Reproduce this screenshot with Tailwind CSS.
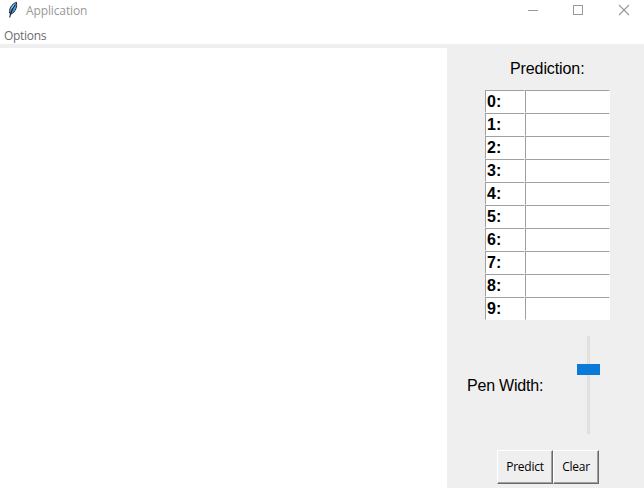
<!DOCTYPE html>
<html lang="en">
<head>
<meta charset="utf-8">
<title>Application</title>
<script src="https://cdn.jsdelivr.net/npm/@tailwindcss/browser@4"></script>
</head>
<body class="w-[644px] h-[488px] overflow-hidden bg-[#efefef] flex flex-col text-black font-['Liberation_Sans',Arial,sans-serif]">
<header class="h-[22px] shrink-0 bg-white flex items-start font-['Open_Sans','Noto_Sans',sans-serif]">
  <svg class="ml-[7px] mt-[1px] shrink-0" width="12" height="17" viewBox="0 0 12 17">
    <path d="M9.500 1.300C6.500 2 3.600 5 2.700 8.500L2.500 12l1.700 1C7 12 9.300 8.500 9.700 5z" fill="#4c93d0" stroke="#1b2536" stroke-width="1" stroke-dasharray="2.500 .5"/>
    <path d="M8.300 3.500C6.500 6 4.500 9.500 3.500 13L2.700 16.500" fill="none" stroke="#111722" stroke-width="1.100"/>
    <path d="M7.300 3.500L4.500 7.500" stroke="#a4d0f2"/>
  </svg>
  <h1 class="ml-[7px] mt-[2px] w-[100px] text-[12px] leading-[18px] tracking-[-0.12px] text-[#999] whitespace-nowrap">Application</h1>
  <div class="ml-auto mr-[14px] mt-[4px] flex gap-[35px]">
    <svg width="10" height="12" shape-rendering="crispEdges"><path d="M0 6.500h10" stroke="#999"/></svg>
    <svg width="10" height="12" shape-rendering="crispEdges"><path d="M.5 1.500h9v9h-9z" fill="none" stroke="#999"/></svg>
    <svg width="12" height="12"><path d="M1 1l10 10M11 1l-10 10" stroke="#999" stroke-width="1.100"/></svg>
  </div>
</header>
<nav class="h-[22px] shrink-0 bg-white pl-[4px] pt-[5px] text-[12px] leading-[18px] tracking-[-0.3px] text-[#6d6d6d] font-['Open_Sans','Noto_Sans',sans-serif]">Options</nav>
<main class="flex flex-1 pt-[4px] min-h-0">
  <div class="w-[447px] shrink-0 bg-white"></div>
  <aside class="flex-1 flex flex-col">
    <h2 class="ml-[63px] mt-[11px] h-[31px] text-[16px] leading-[20px] tracking-[-0.1px] whitespace-nowrap">Prediction:</h2>
    <div id="rows" class="ml-[38px] w-[125px] shrink-0"></div>
    <div class="flex h-[98px] mt-[16px] shrink-0">
      <span class="ml-[20px] mt-[40px] w-[110px] text-[16px] leading-[20px] tracking-[-0.2px] whitespace-nowrap">Pen Width:</span>
      <div class="relative w-[23px] flex justify-center">
        <div class="w-[3px] h-full border border-[#dcdcd8] bg-[#e7e7e5]"></div>
        <div class="absolute left-0 top-[28px] w-[23px] h-[11px] bg-[#0a7ad8]"></div>
      </div>
    </div>
    <div class="flex ml-[50px] mt-[16px] font-['Open_Sans','Noto_Sans',sans-serif] text-[12px] tracking-[-0.25px]">
      <button class="w-[56px] h-[34px] border border-t-white border-l-white border-b-[#696969] border-r-[#696969] shadow-[inset_-1px_-1px_#a0a0a0] whitespace-nowrap">Predict</button>
      <button class="w-[46px] h-[34px] border border-t-white border-l-white border-b-[#696969] border-r-[#696969] shadow-[inset_-1px_-1px_#a0a0a0] whitespace-nowrap">Clear</button>
    </div>
  </aside>
</main>
<script>
document.getElementById('rows').innerHTML = Array.from({length: 10}, (_, i) =>
  `<div class="flex h-[23px]">
    <div class="w-[40px] border border-t-[#a0a0a0] border-l-[#a0a0a0] border-b-white border-r-white bg-white pl-[1px] text-[16px] leading-[21px] font-bold">${i}:</div>
    <div class="w-[85px] border border-t-[#a0a0a0] border-l-[#a0a0a0] border-b-white border-r-white bg-white"></div>
  </div>`).join('');
</script>
</body>
</html>
